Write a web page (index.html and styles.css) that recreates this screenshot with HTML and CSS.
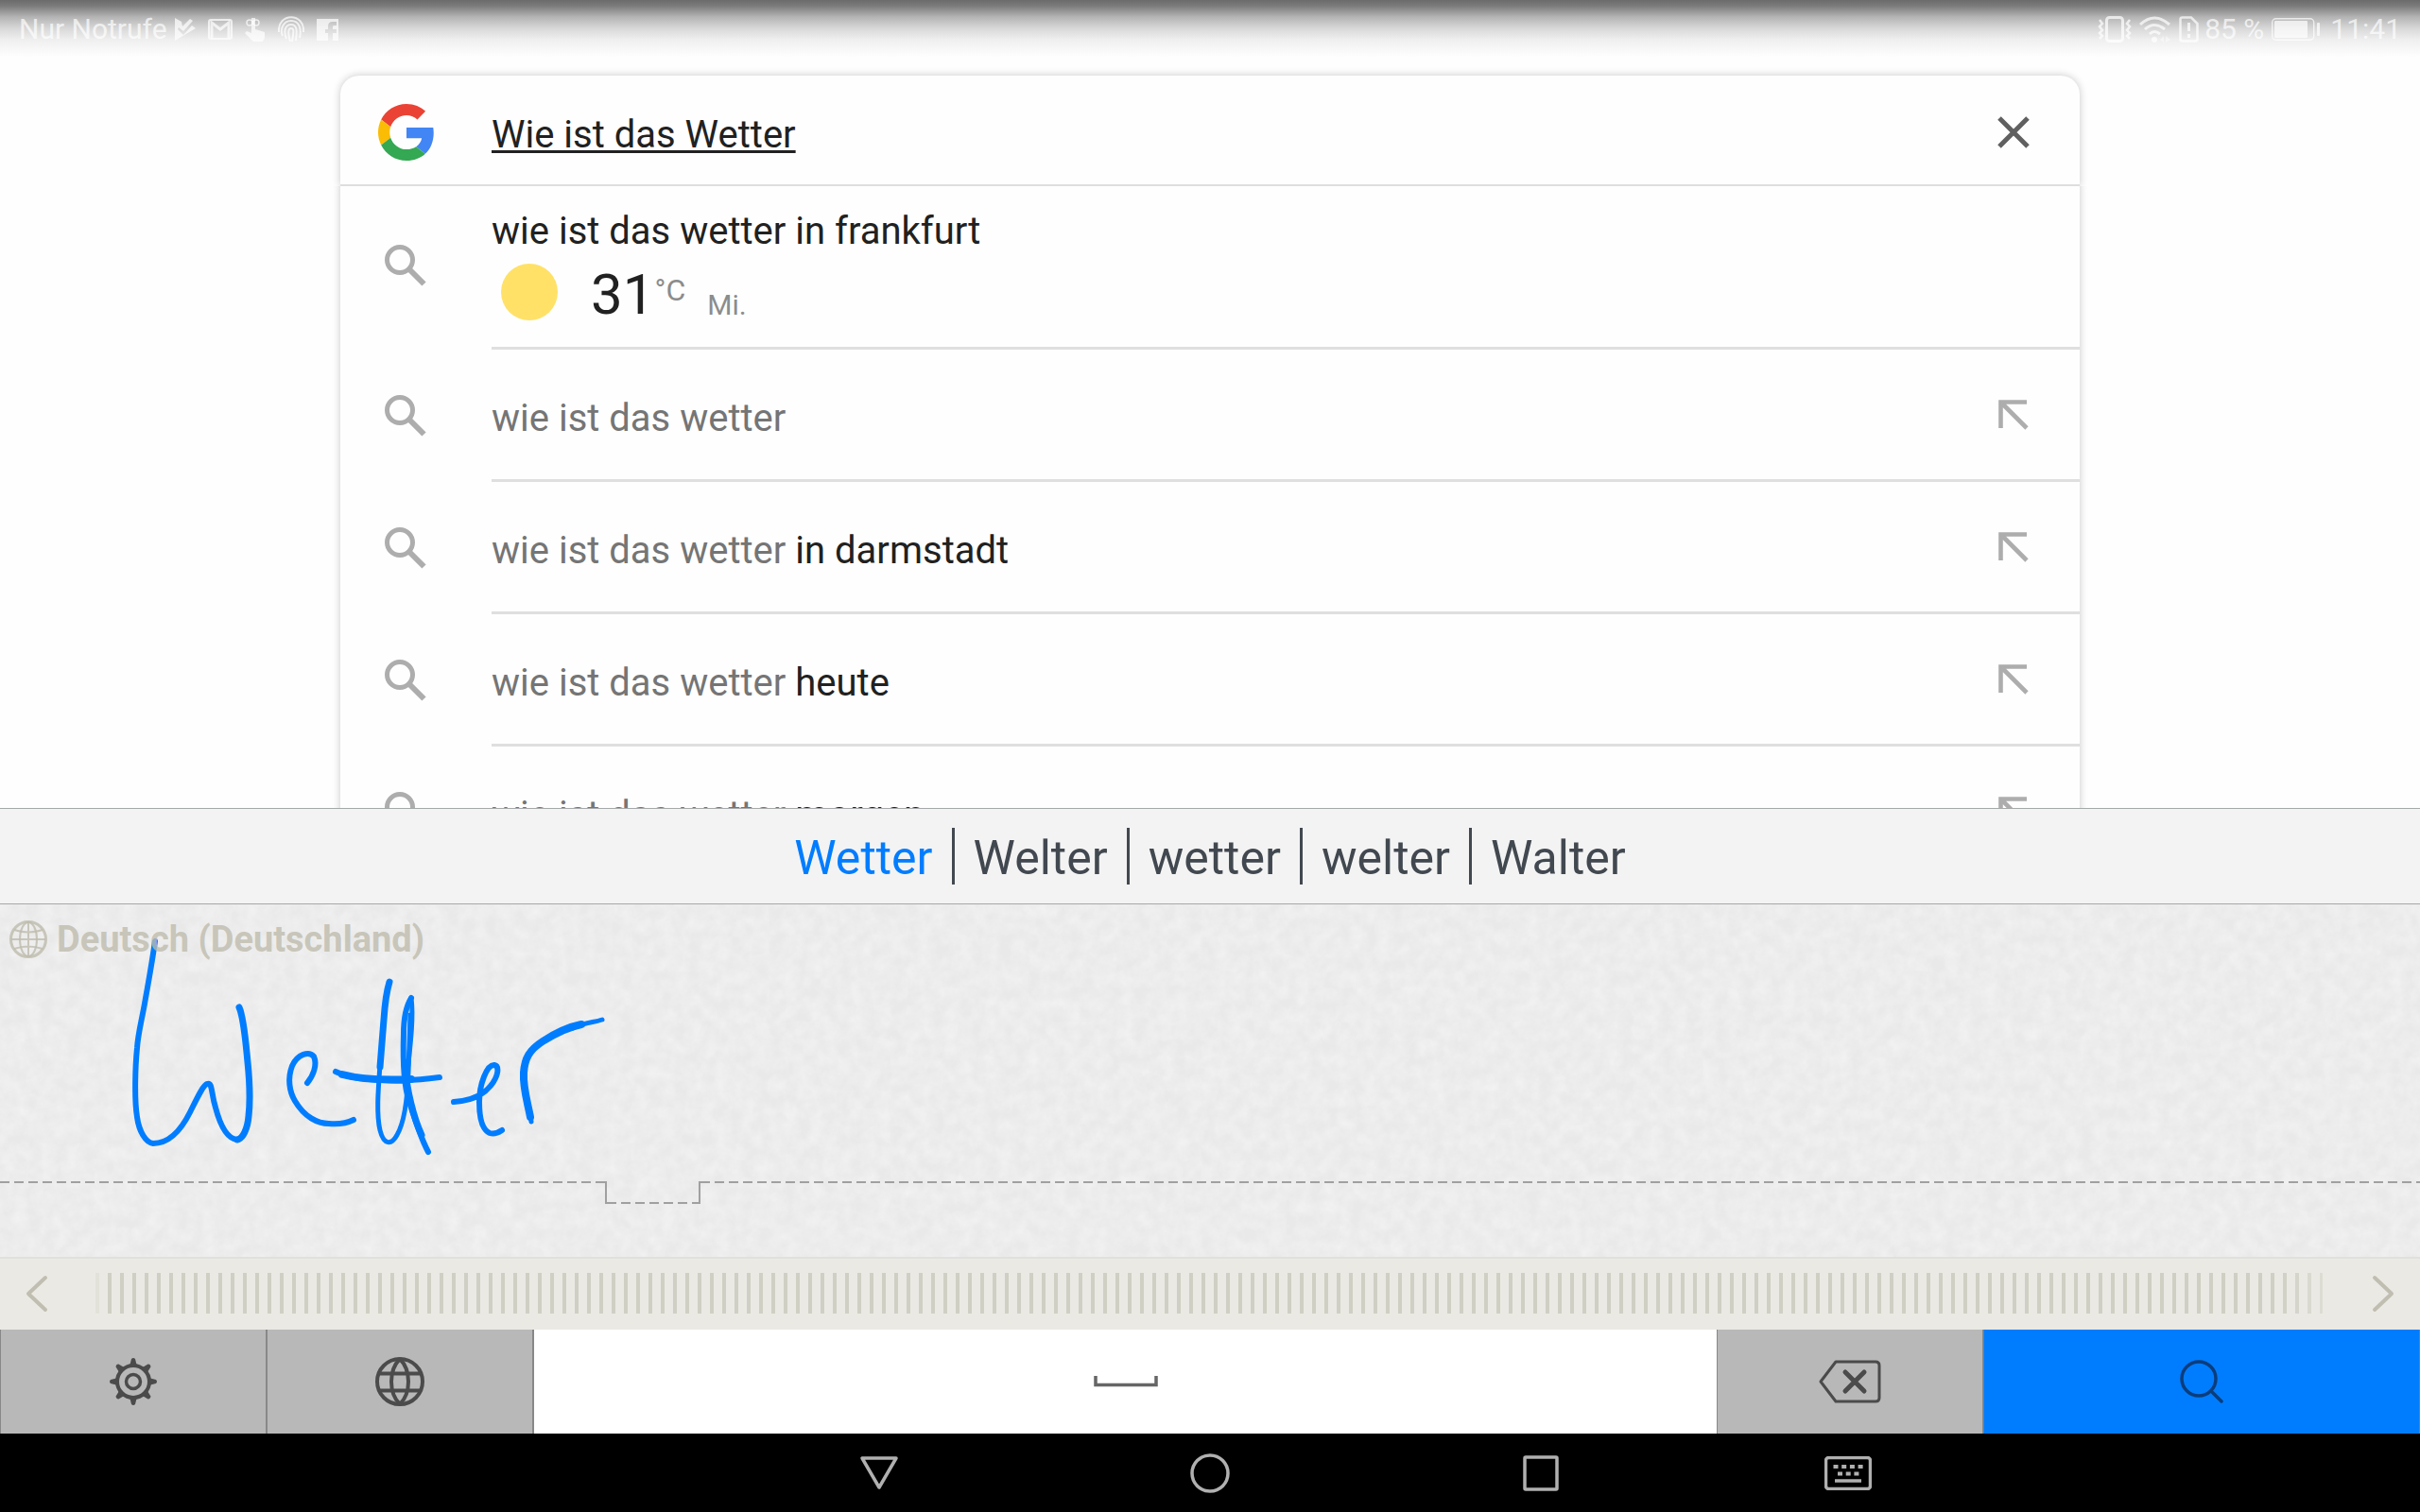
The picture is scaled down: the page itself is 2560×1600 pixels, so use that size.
FILE: index.html
```html
<!DOCTYPE html>
<html lang="de">
<head>
    <meta charset="UTF-8">
    <meta name="viewport" content="width=device-width, initial-scale=1.0">
    <title>Wie ist das Wetter</title>
    <link rel="stylesheet" href="styles.css">
</head>
<body>

<!-- Shared icons -->
<svg class="sprite" width="0" height="0" aria-hidden="true">
    <symbol id="icon-search" viewBox="0 0 44 44">
        <circle cx="16" cy="16" r="13.5" fill="none" stroke="currentColor" stroke-width="5"/>
        <path d="M26.5 26.5L41.5 41.5" fill="none" stroke="currentColor" stroke-width="6"/>
    </symbol>
    <symbol id="icon-insert" viewBox="0 0 32 32">
        <path d="M2.5 30V2.5H30M3 3L30 30" fill="none" stroke="currentColor" stroke-width="4.6"/>
    </symbol>
    <filter id="paper" x="0" y="0" width="100%" height="100%">
        <feTurbulence type="fractalNoise" baseFrequency="0.07" numOctaves="4" seed="4"/>
        <feColorMatrix values="0 0 0 0 1  0 0 0 0 1  0 0 0 0 1  0.6 0 0 0 -0.15"/>
    </filter>
</svg>

<header class="status-bar">
    <div class="status-group">
        <span>Nur Notrufe</span>
        <svg class="st-play" width="22" height="24" viewBox="0 0 22 24"><path d="M0 0L7 4L8 9L16 1L19 3L9 14L4 10L3 12L9 18L18 8L22 11L0 24Z" fill="currentColor"/></svg>
        <svg class="st-mail" width="26" height="22" viewBox="0 0 26 22"><rect x="1" y="1" width="24" height="20" rx="2" fill="none" stroke="currentColor" stroke-width="2"/><path d="M4 20V4L13 11L22 4V20" fill="none" stroke="currentColor" stroke-width="3"/></svg>
        <svg class="st-touch" width="22" height="26" viewBox="0 0 22 26"><path d="M7 1H11V13L21 16V22L19 26H9L0 17L2 15L7 17Z" fill="currentColor"/><circle cx="5" cy="6" r="3" fill="none" stroke="currentColor" stroke-width="1.5"/><circle cx="12" cy="6" r="3" fill="none" stroke="currentColor" stroke-width="1.5"/></svg>
        <svg class="st-finger" width="28" height="28" viewBox="0 0 28 28"><path d="M1 17C-1 -4 29 -4 27 17M5 21C2 15 5 5 14 5S25 14 23 23M9 24C6 17 7 9 14 9S20 17 19 26M13 27C11 20 10 13 14 13S16 19 15 27" fill="none" stroke="currentColor" stroke-width="2"/></svg>
        <svg class="st-fb" width="23" height="23" viewBox="0 0 23 23"><path d="M0 0H23V23H17V15H21V11H17V8Q17 7 19 7H21V3H17Q12 3 12 8V11H9V15H12V23H0Z" fill="currentColor"/></svg>
    </div>
    <div class="status-group">
        <svg class="st-vibrate" width="36" height="28" viewBox="0 0 36 28"><rect x="9.500" y="1.500" width="17" height="25" rx="3" fill="none" stroke="currentColor" stroke-width="3"/><path d="M2 4L5 8L2 11L5 15L2 18L5 21L2 24M34 4L31 8L34 11L31 15L34 18L31 21L34 24" fill="none" stroke="currentColor" stroke-width="2.500"/></svg>
        <svg class="st-wifi" width="34" height="28" viewBox="0 0 34 28"><path d="M1 9Q16 -5 32 9M6 14Q16 5 27 14M11 19Q16 14 22 19" fill="none" stroke="currentColor" stroke-width="3"/><circle cx="16" cy="25" r="3" fill="currentColor"/><path d="M28 21L33 25L28 28ZM26 21L22 25L26 28Z" fill="currentColor" opacity="0.6"/></svg>
        <svg class="st-sim" width="21" height="28" viewBox="0 0 21 28"><path d="M3.500 1.500H13L19.500 8V24.500Q19.500 26.500 17.500 26.500H3.500Q1.500 26.500 1.500 24.500V3.500Q1.500 1.500 3.500 1.500Z" fill="none" stroke="currentColor" stroke-width="2.500"/><path d="M10.500 7V16M10.500 19V23" stroke="currentColor" stroke-width="3"/></svg>
        <span>85 %</span>
        <svg class="st-battery" width="52" height="24" viewBox="0 0 52 24"><rect x="0.700" y="0.700" width="44" height="22.600" rx="4" fill="none" stroke="currentColor" stroke-width="1.400"/><rect x="3" y="3" width="35" height="18" rx="1" fill="currentColor"/><rect x="48" y="5" width="3" height="14" rx="1" fill="currentColor"/></svg>
        <span>11:41</span>
    </div>
</header>

<main class="search">
    <form class="search-box" role="search">
        <svg class="google-logo" width="60" height="60" viewBox="0 0 48 48" aria-label="Google">
            <path fill="#EA4335" d="M24 9.500c3.540 0 6.710 1.220 9.210 3.600l6.850-6.850C35.900 2.380 30.470 0 24 0 14.620 0 6.510 5.380 2.560 13.220l7.980 6.190C12.430 13.720 17.740 9.500 24 9.500z"/>
            <path fill="#4285F4" d="M46.980 24.550c0-1.570-.15-3.090-.38-4.550H24v9.020h12.940c-.58 2.960-2.260 5.480-4.780 7.180l7.730 6c4.510-4.180 7.090-10.360 7.090-17.650z"/>
            <path fill="#FBBC05" d="M10.530 28.590c-.48-1.450-.76-2.990-.76-4.590s.27-3.140.76-4.590l-7.980-6.190C.92 16.460 0 20.120 0 24c0 3.880.92 7.540 2.560 10.780l7.970-6.190z"/>
            <path fill="#34A853" d="M24 48c6.480 0 11.930-2.130 15.890-5.810l-7.730-6c-2.150 1.450-4.920 2.300-8.160 2.300-6.260 0-11.570-4.220-13.470-9.910l-7.980 6.190C6.510 42.620 14.620 48 24 48z"/>
        </svg>
        <input type="text" class="search-input" aria-label="Suche" value="Wie ist das Wetter" spellcheck="false">
        <button type="button" class="icon-button clear" aria-label="Löschen">
            <svg width="34" height="34" viewBox="0 0 34 34"><path d="M2 2L32 32M32 2L2 32" stroke="currentColor" stroke-width="5"/></svg>
        </button>
    </form>

    <ul class="suggestions">
        <li class="suggestion weather">
            <svg class="search-icon" width="44" height="44"><use href="#icon-search"/></svg>
            <div class="suggestion-body">
                <a href="#" class="suggestion-text"><b>wie ist das wetter in frankfurt</b></a>
                <div class="forecast">
                    <span class="sun"></span>
                    <span class="degrees">31</span>
                    <span class="unit">°C</span>
                    <span class="day">Mi.</span>
                </div>
            </div>
        </li>
        <li class="suggestion">
            <svg class="search-icon" width="44" height="44"><use href="#icon-search"/></svg>
            <div class="suggestion-body">
                <a href="#" class="suggestion-text">wie ist das wetter</a>
                <button type="button" class="icon-button" aria-label="Übernehmen"><svg width="32" height="32"><use href="#icon-insert"/></svg></button>
            </div>
        </li>
        <li class="suggestion">
            <svg class="search-icon" width="44" height="44"><use href="#icon-search"/></svg>
            <div class="suggestion-body">
                <a href="#" class="suggestion-text">wie ist das wetter <b>in darmstadt</b></a>
                <button type="button" class="icon-button" aria-label="Übernehmen"><svg width="32" height="32"><use href="#icon-insert"/></svg></button>
            </div>
        </li>
        <li class="suggestion">
            <svg class="search-icon" width="44" height="44"><use href="#icon-search"/></svg>
            <div class="suggestion-body">
                <a href="#" class="suggestion-text">wie ist das wetter <b>heute</b></a>
                <button type="button" class="icon-button" aria-label="Übernehmen"><svg width="32" height="32"><use href="#icon-insert"/></svg></button>
            </div>
        </li>
        <li class="suggestion">
            <svg class="search-icon" width="44" height="44"><use href="#icon-search"/></svg>
            <div class="suggestion-body">
                <a href="#" class="suggestion-text">wie ist das wetter <b>morgen</b></a>
                <button type="button" class="icon-button" aria-label="Übernehmen"><svg width="32" height="32"><use href="#icon-insert"/></svg></button>
            </div>
        </li>
    </ul>
</main>

<section class="keyboard">
    <div class="candidates">
        <button type="button" class="candidate active">Wetter</button>
        <button type="button" class="candidate">Welter</button>
        <button type="button" class="candidate">wetter</button>
        <button type="button" class="candidate">welter</button>
        <button type="button" class="candidate">Walter</button>
    </div>

    <div class="pad">
        <svg class="paper" width="100%" height="100%"><rect width="100%" height="100%" filter="url(#paper)"/></svg>
        <!-- Handwritten word -->
        <svg class="ink" width="760" height="373" viewBox="0 0 760 373">
            <g fill="none" stroke="#007dff" stroke-linecap="round" stroke-linejoin="round">
                <path stroke-width="6" d="M164 57C160 85 157 100 153 123C149 145 146 155 145 170C143 190 142 225 145 243C147 258 154 270 162 271C182 271 194 252 201 238C208 224 215 209 219 208C225 206 223 217 228 233C233 252 240 266 251 267"/>
                <path stroke-width="7" d="M253 127C258 138 260 165 262 185C264 205 265 225 263 242C262 255 257 266 251 267"/>
                <path stroke-width="6" d="M325 207C331 200 336 188 332 179C327 173 315 176 309 189C304 202 306 216 312 226C322 243 336 250 348 250C360 251 368 249 374 246"/>
                <path stroke-width="7" d="M412 100C408 113 407 125 406 140L402 190"/>
                <path stroke-width="5" d="M402 188C400 215 398 240 402 257C406 273 414 273 420 262C427 250 431 225 432 195L434 135"/>
                <path stroke-width="6" d="M435 117C430 125 427 138 427 155C426 185 427 210 433 227C438 243 445 265 453 280"/>
                <path stroke-width="5" d="M435 117C438 140 433 175 430 205"/>
                <path stroke-width="7" d="M428 185C430 215 438 245 446 262"/>
                <path stroke-width="6" d="M355 195C365 200 376 202 390 203C420 206 440 204 465 201"/>
                <path stroke-width="8" d="M362 198C385 204 415 204 435 203"/>
                <path stroke-width="6" d="M480 227C499 226 511 220 519 210C528 199 528 189 523 188C515 187 507 209 507 227C507 246 511 257 518 260C524 262 528 259 531 257"/>
                <path stroke-width="8" d="M561 243C558 227 553 212 554 196C555 181 560 172 574 163C588 154 600 148 615 145"/>
                <path stroke-width="5" d="M560 235L562 248M606 149C618 143 628 143 637 140"/>
            </g>
        </svg>
        <div class="language">
            <svg width="40" height="40" viewBox="0 0 40 40" fill="none" stroke="currentColor" stroke-width="2"><circle cx="20" cy="20" r="18.500" stroke-width="3"/><ellipse cx="20" cy="20" rx="9" ry="18"/><path d="M20 2V38M2 20H38M5 10Q20 15 35 10M5 30Q20 25 35 30"/></svg>
            <span>Deutsch (Deutschland)</span>
        </div>
        <div class="baseline">
            <span class="dash before"></span>
            <span class="notch"></span>
            <span class="dash after"></span>
        </div>
    </div>

    <div class="scroller">
        <button type="button" class="scroll-button" aria-label="Zurück">
            <svg width="24" height="40" viewBox="0 0 24 40"><path d="M21 3L3 20L21 37" fill="none" stroke="currentColor" stroke-width="4" stroke-linecap="round" stroke-linejoin="round"/></svg>
        </button>
        <div class="ticks"></div>
        <button type="button" class="scroll-button" aria-label="Weiter">
            <svg width="24" height="40" viewBox="0 0 24 40"><path d="M3 3L21 20L3 37" fill="none" stroke="currentColor" stroke-width="4" stroke-linecap="round" stroke-linejoin="round"/></svg>
        </button>
    </div>

    <div class="keys">
        <button type="button" class="key" aria-label="Einstellungen">
            <svg width="50" height="50" viewBox="0 0 50 50">
                <g fill="none" stroke="currentColor"><circle cx="25" cy="25" r="17" stroke-width="4"/><circle cx="25" cy="25" r="7.500" stroke-width="3.500"/></g>
                <g fill="currentColor"><path id="tooth" d="M21 9L23 1Q25 -1 27 1L29 9Z"/><use href="#tooth" transform="rotate(45 25 25)"/><use href="#tooth" transform="rotate(90 25 25)"/><use href="#tooth" transform="rotate(135 25 25)"/><use href="#tooth" transform="rotate(180 25 25)"/><use href="#tooth" transform="rotate(225 25 25)"/><use href="#tooth" transform="rotate(270 25 25)"/><use href="#tooth" transform="rotate(315 25 25)"/></g>
            </svg>
        </button>
        <button type="button" class="key" aria-label="Sprache">
            <svg width="52" height="52" viewBox="0 0 52 52" fill="none" stroke="currentColor" stroke-width="4"><circle cx="26" cy="26" r="24"/><path d="M26 2C14 14 14 38 26 50M26 2C38 14 38 38 26 50M4 17.500H48M4 35.500H48"/></svg>
        </button>
        <button type="button" class="key space" aria-label="Leerzeichen">
            <svg width="68" height="12" viewBox="0 0 68 12"><path d="M2 0V9.500H66V0" fill="none" stroke="currentColor" stroke-width="3.500"/></svg>
        </button>
        <button type="button" class="key" aria-label="Rücktaste">
            <svg width="66" height="46" viewBox="0 0 66 46" fill="none" stroke="currentColor"><path stroke-width="3" stroke-linejoin="round" d="M2 23L18 2H60Q64 2 64 6V40Q64 44 60 44H18Z"/><path stroke-width="5" stroke-linecap="round" d="M28 13L48 33M48 13L28 33"/></svg>
        </button>
        <button type="button" class="key enter" aria-label="Suchen">
            <svg width="46" height="46" viewBox="0 0 46 46" fill="none" stroke="currentColor" stroke-width="3.500"><circle cx="20" cy="20" r="18"/><path d="M33 33L44 44" stroke-linecap="round"/></svg>
        </button>
    </div>
</section>

<nav class="nav-bar">
    <button type="button" class="nav-button" aria-label="Zurück"><svg width="42" height="42" viewBox="0 0 42 42"><path d="M3 5H39L21 36Z" fill="none" stroke="currentColor" stroke-width="3.500" stroke-linejoin="round"/></svg></button>
    <button type="button" class="nav-button" aria-label="Startseite"><svg width="42" height="42" viewBox="0 0 42 42"><circle cx="21" cy="21" r="19" fill="none" stroke="currentColor" stroke-width="3.500"/></svg></button>
    <button type="button" class="nav-button" aria-label="Übersicht"><svg width="42" height="42" viewBox="0 0 42 42"><rect x="4" y="4" width="34" height="34" rx="1" fill="none" stroke="currentColor" stroke-width="3.500"/></svg></button>
    <button type="button" class="nav-button switcher" aria-label="Tastatur">
        <svg width="50" height="36" viewBox="0 0 50 36"><rect x="1.500" y="1.500" width="47" height="33" rx="3" fill="none" stroke="currentColor" stroke-width="3.500"/><path d="M9.500 11H41.500" stroke="currentColor" stroke-width="4" stroke-dasharray="5 3.700"/><path d="M14 18.500H37" stroke="currentColor" stroke-width="4" stroke-dasharray="5 3.700"/><path d="M11 26H39" stroke="currentColor" stroke-width="3.500"/></svg>
    </button>
</nav>

</body>
</html>
```
FILE: styles.css
```css
* {
    box-sizing: border-box;
}
body {
    font-family: Roboto, "Open Sans", sans-serif;
    background-color: #fefefe;
    color: #212121;
    margin: 0;
    height: 100vh;
    display: flex;
    flex-direction: column;
    overflow: hidden;
}
button {
    font: inherit;
    color: inherit;
    background: none;
    border: none;
    padding: 0;
    cursor: pointer;
}
svg {
    display: block;
    flex: none;
}
.sprite {
    position: absolute;
}

/* Status bar */
.status-bar {
    display: flex;
    justify-content: space-between;
    height: 60px;
    padding: 0 20px;
    font-size: 30px;
    line-height: 60px;
    color: rgba(255, 255, 255, 0.7);
    background: linear-gradient(#6b6b6b 0, #7a7a7a 10%, #b4b4b4 30%, #d8d8d8 50%, #efefef 70%, #fefefe 100%);
}
.status-group {
    display: flex;
    align-items: center;
    padding-top: 2px;
    white-space: nowrap;
}
.status-group svg {
    margin-left: 13px;
}
.status-group .st-play {
    margin-left: 8px;
}
.status-group .st-wifi {
    margin-left: 8px;
}
.status-group .st-sim {
    margin-left: 8px;
    margin-right: 6px;
}
.status-group .st-battery {
    margin-left: 8px;
    margin-right: 10px;
}

/* Search card */
.search {
    flex: 1;
    min-height: 0;
    overflow: hidden;
    padding-top: 20px;
}
.search-box,
.suggestions {
    max-width: 1840px;
    margin: 0 auto;
    background-color: #fefefe;
    box-shadow: 0 0 8px rgba(0, 0, 0, 0.22);
}
.search-box {
    display: flex;
    align-items: center;
    height: 117px;
    padding: 4px 53px 0 40px;
    border-radius: 20px 20px 0 0;
    border-bottom: 2px solid #dedede;
}
.search-input {
    flex: 1;
    min-width: 0;
    height: 60px;
    margin-left: 60px;
    padding: 6px 0 0;
    border: none;
    outline: none;
    background: none;
    font: inherit;
    font-size: 40px;
    color: inherit;
    text-decoration: underline;
    text-decoration-thickness: 3px;
    text-underline-offset: 3px;
}
.icon-button {
    color: #adadad;
}
.clear {
    color: #606060;
}
.suggestions {
    padding: 0;
    list-style: none;
    position: relative;
    clip-path: inset(0 -12px 0 -12px);
}
.suggestion {
    display: flex;
    align-items: center;
    height: 140px;
    padding-left: 47px;
}
.search-icon {
    color: #adadad;
}
.suggestion-body {
    flex: 1;
    display: flex;
    align-items: center;
    justify-content: space-between;
    align-self: stretch;
    margin-left: 69px;
    padding-right: 54px;
    border-bottom: 3px solid #dfdfdf;
}
.suggestion-text {
    padding-top: 8px;
    font-size: 40px;
    line-height: 48px;
    color: #757575;
    text-decoration: none;
}
.suggestion-text b {
    font-weight: normal;
    color: #212121;
}
.weather {
    height: 173px;
}
.weather .search-icon {
    margin-bottom: 5px;
}
.weather .suggestion-body {
    flex-direction: column;
    align-items: flex-start;
    justify-content: flex-start;
    padding-top: 16px;
}
.forecast {
    display: flex;
    align-items: center;
    height: 80px;
    color: #8c8c8c;
}
.sun {
    width: 60px;
    height: 60px;
    margin: 0 35px 0 10px;
    border-radius: 50%;
    background-color: #ffe168;
}
.degrees {
    padding-top: 4px;
    font-size: 60px;
    color: #212121;
}
.unit {
    font-size: 32px;
    line-height: 40px;
    padding-bottom: 4px;
}
.day {
    margin-left: 23px;
    font-size: 30px;
    line-height: 40px;
    padding-top: 28px;
}

/* Handwriting keyboard */
.candidates {
    display: flex;
    align-items: center;
    justify-content: center;
    height: 102px;
    background-color: #f3f3f3;
    border-top: 1px solid #a5a8aa;
    border-bottom: 1px solid #a5a8aa;
    font-size: 50px;
    line-height: 56px;
    color: #424850;
}
.candidate {
    padding: 4px 20px 0;
}
.candidate + .candidate {
    border-left: 3px solid #424850;
}
.candidate.active {
    color: #007dff;
}
.pad {
    position: relative;
    height: 373px;
    padding: 16px 0 0;
    background-color: #e9e9e9;
}
.paper {
    position: absolute;
    inset: 0;
}
.ink {
    position: absolute;
    top: -18px;
    left: 0;
    overflow: visible;
}
.language {
    position: relative;
    z-index: 1;
    display: flex;
    align-items: center;
    gap: 10px;
    height: 42px;
    padding-left: 10px;
    font-size: 38px;
    font-weight: bold;
    color: rgba(190, 187, 172, 0.8);
}
.baseline {
    position: relative;
    display: flex;
    margin-top: 235px;
}
.dash,
.notch {
    height: 24px;
    background: repeating-linear-gradient(to right, #a0a0a0 0 10px, transparent 10px 15px) 0 0 / 100% 2px no-repeat;
}
.before {
    width: 25%;
}
.notch {
    width: 101px;
    border-left: 2px solid #a0a0a0;
    border-right: 2px solid #a0a0a0;
    background-position: 0 100%;
}
.after {
    flex: 1;
}
.scroller {
    display: flex;
    align-items: center;
    justify-content: space-between;
    height: 77px;
    padding: 0 27px 2px;
    background-color: #eae9e4;
    border-top: 2px solid #e0e1dd;
    color: #c0beb0;
}
.ticks {
    flex: 1;
    height: 43px;
    margin: 0 52px 0 50px;
    background: repeating-linear-gradient(to right, #d0cfc4 0 4px, transparent 4px 13px);
    mask-image: linear-gradient(to right, rgba(0, 0, 0, 0.3) 6px, #000 13px, #000 98%, rgba(0, 0, 0, 0.5));
}
.keys {
    display: grid;
    grid-template-columns: 282fr 282fr 1252fr 282fr 462fr;
    height: 110px;
}
.key {
    display: flex;
    align-items: center;
    justify-content: center;
    background-color: #b8b8b8;
    border-left: 1px solid #888;
    border-right: 1px solid #888;
    color: #4b4b4b;
}
.key.space {
    background-color: #fff;
    color: #666;
    border-width: 0 0 0 1px;
}
.key.enter {
    background-color: #007dff;
    border-color: #4a85c0;
    color: #0b3d7c;
}

/* Navigation bar */
.nav-bar {
    position: relative;
    display: flex;
    align-items: center;
    justify-content: center;
    height: 83px;
    background-color: #000;
    color: #b0b0b0;
}
.nav-button {
    display: flex;
    justify-content: center;
    width: 350px;
}
.switcher {
    width: 300px;
    margin-right: -300px;
}
```
